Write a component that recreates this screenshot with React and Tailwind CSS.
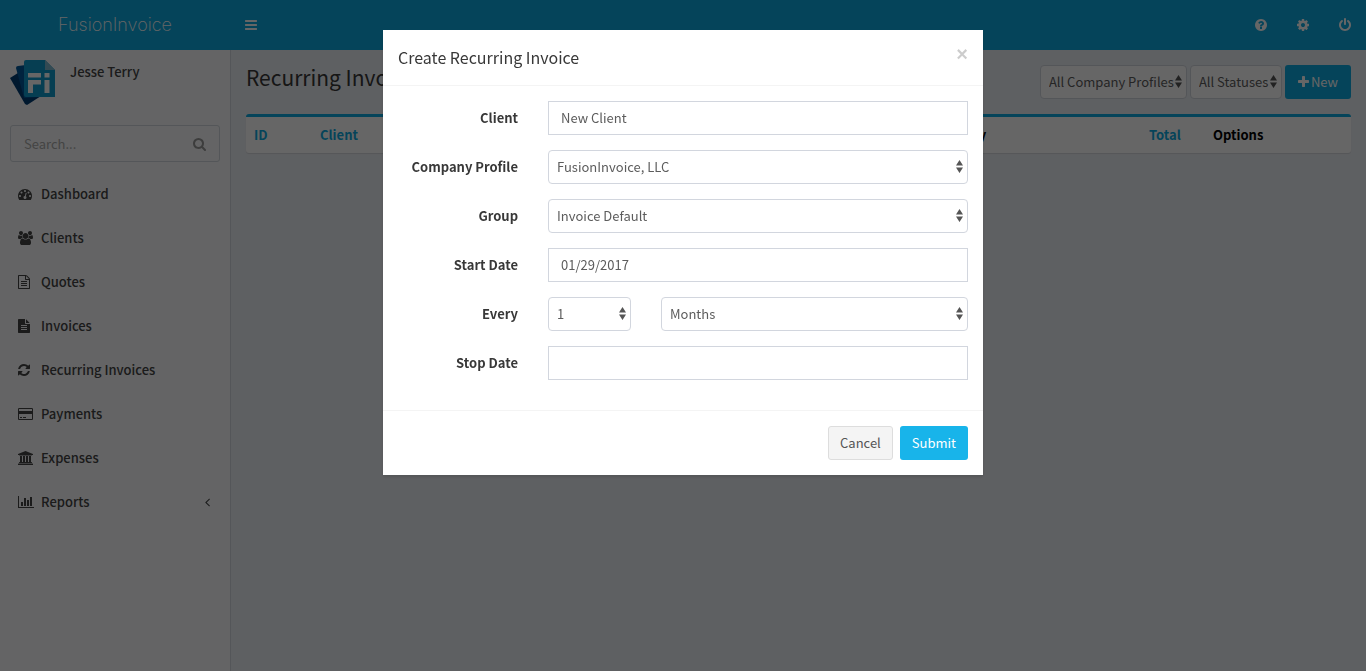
import React from "react";

const ICONS = {
  bars: ["128 0 1536 1792", "M1664 1344v128q0 26-19 45t-45 19h-1408q-26 0-45-19t-19-45v-128q0-26 19-45t45-19h1408q26 0 45 19t19 45zm0-512v128q0 26-19 45t-45 19h-1408q-26 0-45-19t-19-45v-128q0-26 19-45t45-19h1408q26 0 45 19t19 45zm0-512v128q0 26-19 45t-45 19h-1408q-26 0-45-19t-19-45v-128q0-26 19-45t45-19h1408q26 0 45 19t19 45z"],
  search: ["64 0 1664 1792", "M1216 832q0-185-131.5-316.5t-316.5-131.5-316.5 131.5-131.5 316.5 131.5 316.5 316.5 131.5 316.5-131.5 131.5-316.5zm512 832q0 52-38 90t-90 38q-54 0-90-38l-343-342q-179 124-399 124-143 0-273.5-55.5t-225-150-150-225-55.5-273.5 55.5-273.5 150-225 225-150 273.5-55.5 273.5 55.5 225 150 150 225 55.5 273.5q0 220-124 399l343 343q37 37 37 90z"],
  question: ["128 0 1536 1792", "M1024 1376v-192q0-14-9-23t-23-9h-192q-14 0-23 9t-9 23v192q0 14 9 23t23 9h192q14 0 23-9t9-23zm256-672q0-88-55.5-163t-138.5-116-170-41q-243 0-371 213-15 24 8 42l132 100q7 6 19 6 16 0 25-12 53-68 86-92 34-24 86-24 48 0 85.5 26t37.5 59q0 38-20 61t-68 45q-63 28-115.5 86.5t-52.5 125.5v36q0 14 9 23t23 9h192q14 0 23-9t9-23q0-19 21.5-49.5t54.5-49.5q32-18 49-28.5t46-35 44.5-48 28-60.5 12.5-81zm384 192q0 209-103 385.5t-279.5 279.5-385.5 103-385.5-103-279.5-279.5-103-385.5 103-385.5 279.5-279.5 385.5-103 385.5 103 279.5 279.5 103 385.5z"],
  cog: ["128 0 1536 1792", "M1152 896q0-106-75-181t-181-75-181 75-75 181 75 181 181 75 181-75 75-181zm512-109v222q0 12-8 23t-20 13l-185 28q-19 54-39 91 35 50 107 138 10 12 10 25t-9 23q-27 37-99 108t-94 71q-12 0-26-9l-138-108q-44 23-91 38-16 136-29 186-7 28-36 28h-222q-14 0-24.5-8.5t-11.5-21.5l-28-184q-49-16-90-37l-141 107q-10 9-25 9-14 0-25-11-126-114-165-168-7-10-7-23 0-12 8-23 15-21 51-66.5t54-70.5q-27-50-41-99l-183-27q-13-2-21-12.5t-8-23.5v-222q0-12 8-23t19-13l186-28q14-46 39-92-40-57-107-138-10-12-10-24 0-10 9-23 26-36 98.5-107.5t94.5-71.5q13 0 26 10l138 107q44-23 91-38 16-136 29-186 7-28 36-28h222q14 0 24.5 8.5t11.5 21.5l28 184q49 16 90 37l142-107q9-9 24-9 13 0 25 10 129 119 165 170 7 8 7 22 0 12-8 23-15 21-51 66.5t-54 70.5q26 50 41 98l183 28q13 2 21 12.5t8 23.5z"],
  power: ["128 0 1536 1792", "M1664 896q0 156-61 298t-164 245-245 164-298 61-298-61-245-164-164-245-61-298q0-182 80.5-343t226.5-270q43-32 95.5-25t83.5 50q32 42 24.5 94.5t-49.5 84.5q-98 74-151.5 181t-53.5 228q0 104 40.5 198.5t109.5 163.5 163.5 109.5 198.5 40.5 198.5-40.5 163.5-109.5 109.5-163.5 40.5-198.5q0-121-53.5-228t-151.5-181q-42-32-49.5-84.5t24.5-94.5q31-43 84-50t95 25q146 109 226.5 270t80.5 343zm-640-768v640q0 52-38 90t-90 38-90-38-38-90v-640q0-52 38-90t90-38 90 38 38 90z"],
  plus: ["192 0 1408 1792", "M1600 736v192q0 40-28 68t-68 28h-416v416q0 40-28 68t-68 28h-192q-40 0-68-28t-28-68v-416h-416q-40 0-68-28t-28-68v-192q0-40 28-68t68-28h416v-416q0-40 28-68t68-28h192q40 0 68 28t28 68v416h416q40 0 68 28t28 68z"],
  dashboard: ["0 0 1792 1792", "M384 1152q0-53-37.5-90.5t-90.5-37.5-90.5 37.5-37.5 90.5 37.5 90.5 90.5 37.5 90.5-37.5 37.5-90.5zm192-448q0-53-37.5-90.5t-90.5-37.5-90.5 37.5-37.5 90.5 37.5 90.5 90.5 37.5 90.5-37.5 37.5-90.5zm428 481l101-382q6-26-7.5-48.5t-38.5-29.5-48 6.5-30 39.5l-101 382q-60 5-107 43.5t-63 98.5q-20 77 20 146t117 89 146-20 89-117q16-60-6-117t-72-91zm660-33q0-53-37.5-90.5t-90.5-37.5-90.5 37.5-37.5 90.5 37.5 90.5 90.5 37.5 90.5-37.5 37.5-90.5zm-640-640q0-53-37.5-90.5t-90.5-37.5-90.5 37.5-37.5 90.5 37.5 90.5 90.5 37.5 90.5-37.5 37.5-90.5zm448 192q0-53-37.5-90.5t-90.5-37.5-90.5 37.5-37.5 90.5 37.5 90.5 90.5 37.5 90.5-37.5 37.5-90.5zm320 448q0 261-141 483-19 29-54 29h-1402q-35 0-54-29-141-221-141-483 0-182 71-348t191-286 286-191 348-71 348 71 286 191 191 286 71 348z"],
  users: ["0 0 1920 1792", "M593 896q-162 5-265 128h-134q-82 0-138-40.5t-56-118.5q0-353 124-353 6 0 43.5 21t97.5 42.5 119 21.5q67 0 133-23-5 37-5 66 0 139 81 256zm1071 637q0 120-73 189.5t-194 69.5h-874q-121 0-194-69.5t-73-189.5q0-53 3.5-103.5t14-109 26.5-108.5 43-97.5 62-81 85.5-53.5 111.5-20q10 0 43 21.5t73 48 107 48 135 21.5 135-21.5 107-48 73-48 43-21.5q61 0 111.5 20t85.5 53.5 62 81 43 97.5 26.5 108.5 14 109 3.5 103.5zm-1024-1277q0 106-75 181t-181 75-181-75-75-181 75-181 181-75 181 75 75 181zm704 384q0 159-112.5 271.5t-271.5 112.5-271.5-112.5-112.5-271.5 112.5-271.5 271.5-112.5 271.5 112.5 112.5 271.5zm576 225q0 78-56 118.5t-138 40.5h-134q-103-123-265-128 81-117 81-256 0-29-5-66 66 23 133 23 59 0 119-21.5t97.5-42.5 43.5-21q124 0 124 353zm-128-609q0 106-75 181t-181 75-181-75-75-181 75-181 181-75 181 75 75 181z"],
  fileO: ["128 0 1536 1792", "M1596 380q28 28 48 76t20 88v1152q0 40-28 68t-68 28h-1344q-40 0-68-28t-28-68v-1600q0-40 28-68t68-28h896q40 0 88 20t76 48zm-444-244v376h376q-10-29-22-41l-313-313q-12-12-41-22zm384 1528v-1024h-416q-40 0-68-28t-28-68v-416h-768v1536h1280zm-1024-864q0-14 9-23t23-9h704q14 0 23 9t9 23v64q0 14-9 23t-23 9h-704q-14 0-23-9t-9-23v-64zm736 224q14 0 23 9t9 23v64q0 14-9 23t-23 9h-704q-14 0-23-9t-9-23v-64q0-14 9-23t23-9h704zm0 256q14 0 23 9t9 23v64q0 14-9 23t-23 9h-704q-14 0-23-9t-9-23v-64q0-14 9-23t23-9h704z"],
  file: ["128 0 1536 1792", "M1596 476q14 14 28 36h-472v-472q22 14 36 28zm-476 164h544v1056q0 40-28 68t-68 28h-1344q-40 0-68-28t-28-68v-1600q0-40 28-68t68-28h800v544q0 40 28 68t68 28zm160 736v-64q0-14-9-23t-23-9h-704q-14 0-23 9t-9 23v64q0 14 9 23t23 9h704q14 0 23-9t9-23zm0-256v-64q0-14-9-23t-23-9h-704q-14 0-23 9t-9 23v64q0 14 9 23t23 9h704q14 0 23-9t9-23zm0-256v-64q0-14-9-23t-23-9h-704q-14 0-23 9t-9 23v64q0 14 9 23t23 9h704q14 0 23-9t9-23z"],
  refresh: ["128 0 1536 1792", "M1639 1056q0 5-1 7-64 268-268 434.5t-478 166.5q-146 0-282.5-55t-243.5-157l-129 129q-19 19-45 19t-45-19-19-45v-448q0-26 19-45t45-19h448q26 0 45 19t19 45-19 45l-137 137q71 66 161 102t187 36q134 0 250-65t186-179q11-17 53-117 8-23 30-23h192q13 0 22.5 9.5t9.5 22.5zm25-800v448q0 26-19 45t-45 19h-448q-26 0-45-19t-19-45 19-45l138-138q-148-137-349-137-134 0-250 65t-186 179q-11 17-53 117-8 23-30 23h-199q-13 0-22.5-9.5t-9.5-22.5v-7q65-268 270-434.5t480-166.5q146 0 284 55.5t245 156.5l130-129q19-19 45-19t45 19 19 45z"],
  card: ["0 0 1920 1792", "M1760 128q66 0 113 47t47 113v1216q0 66-47 113t-113 47h-1600q-66 0-113-47t-47-113v-1216q0-66 47-113t113-47h1600zm-1600 128q-13 0-22.5 9.5t-9.5 22.5v224h1664v-224q0-13-9.5-22.5t-22.5-9.5h-1600zm1600 1280q13 0 22.5-9.5t9.5-22.5v-608h-1664v608q0 13 9.5 22.5t22.5 9.5h1600zm-1504-128v-128h256v128h-256zm384 0v-128h384v128h-384z"],
  bank: ["0 0 1920 1792", "M960 0l960 384v128h-128q0 26-20.5 45t-48.5 19h-1526q-28 0-48.5-19t-20.5-45h-128v-128zm-704 640h256v768h128v-768h256v768h128v-768h256v768h128v-768h256v768h59q28 0 48.5 19t20.5 45v64h-1664v-64q0-26 20.5-45t48.5-19h59v-768zm1595 960q28 0 48.5 19t20.5 45v128h-1920v-128q0-26 20.5-45t48.5-19h1782z"],
  chart: ["0 0 2048 1792", "M640 896v512h-256v-512h256zm384-512v1024h-256v-1024h256zm1024 1152v128h-2048v-1536h128v1408h1920zm-640-896v768h-256v-768h256zm384-384v1152h-256v-1152h256z"],
  angleLeft: ["582 0 640 1792", "M1203 544q0 13-10 23l-393 393 393 393q10 10 10 23t-10 23l-50 50q-10 10-23 10t-23-10l-466-466q-10-10-10-23t10-23l466-466q10-10 23-10t23 10l50 50q10 10 10 23z"],
};

function Icon({ name }) {
  const [box, d] = ICONS[name];
  return (
    <svg viewBox={box} className="h-[14px] w-auto shrink-0 fill-current" aria-hidden="true">
      <path d={d} />
    </svg>
  );
}

function Logo() {
  return (
    <svg viewBox="0 0 45 45" className="size-[45px] shrink-0" aria-hidden="true">
      <path d="M0 18 L8 13 L31 36 L17 45 L15 44 Z" fill="#003c74" />
      <path d="M6 8 Q6 6 8 6 L16 5 L30 37 L14 38 Z" fill="#00579b" />
      <path d="M14 2 Q14 0 16 0 H35 L45 10 V37 H16 Q14 37 14 35 Z" fill="#109cce" />
      <path d="M35 0 L45 10 H35 Z" fill="#7fb8d0" />
      <path d="M18 13h13v4.500h-13z M18 20h13v4.500h-8v8.500h-5z M34.500 13h5v4.500h-5z M34.500 20h5v13h-5z" fill="#fff" />
    </svg>
  );
}

function Select({ id, label, options, compact = false, className = "" }) {
  return (
    <div className={"relative " + className}>
      <select
        id={id}
        aria-label={label}
        className={
          "block h-[34px] w-full appearance-none rounded-[4px] border border-[#d2d6de] bg-white pl-2 text-[13px] text-[#5c5c5c] " +
          (compact ? "pr-3" : "pr-5")
        }
      >
        {options.map((o) => (
          <option key={o}>{o}</option>
        ))}
      </select>
      <svg viewBox="0 0 7 13" className="pointer-events-none absolute top-[10px] right-[5px] h-[13px] w-[7px] fill-[#555]" aria-hidden="true">
        <path d="M3.500 0 L7 5.500 H0 Z M0 7.500 H7 L3.500 13 Z" />
      </svg>
    </div>
  );
}

function Row({ id, label, children }) {
  return (
    <div className="grid grid-cols-4">
      <label htmlFor={id} className="pr-[15px] text-right leading-[34px] font-bold">
        {label}
      </label>
      <div className="col-span-3 px-[15px]">{children}</div>
    </div>
  );
}

function TextInput({ id, value }) {
  return (
    <input
      id={id}
      type="text"
      defaultValue={value}
      className="block h-[34px] w-full border border-[#d2d6de] bg-white px-3 pb-[2px] text-[13px] text-[#5c5c5c]"
    />
  );
}

const NAV = [
  ["dashboard", "Dashboard"],
  ["users", "Clients"],
  ["fileO", "Quotes"],
  ["file", "Invoices"],
  ["refresh", "Recurring Invoices"],
  ["card", "Payments"],
  ["bank", "Expenses"],
  ["chart", "Reports"],
];

function Sidebar() {
  return (
    <aside className="w-[231px] shrink-0 border-r border-[#d2d6de] bg-[#f9fafc] text-[#444]">
      <div className="flex gap-[15px] p-[10px]">
        <Logo />
        <p className="pt-[2px] leading-5 font-medium">Jesse Terry</p>
      </div>
      <form className="mx-[10px] mt-[10px] flex h-[37px] w-[210px] rounded-[3px] border border-[#d2d6de]">
        <input
          type="text"
          aria-label="Search"
          placeholder="Search..."
          className="min-w-0 flex-1 bg-transparent pl-[13px] placeholder:text-[#aaa]"
        />
        <button type="button" aria-label="Search" className="px-[13px] text-[#999]">
          <Icon name="search" />
        </button>
      </form>
      <nav className="mt-[10px]">
        {NAV.map(([icon, label]) => (
          <a key={label} href="#" className="flex h-11 items-center pr-5 pl-[18px] font-medium">
            <span className="w-[23px]">
              <Icon name={icon} />
            </span>
            <span className="flex-1">{label}</span>
            {label === "Reports" && <Icon name="angleLeft" />}
          </a>
        ))}
      </nav>
    </aside>
  );
}

function Modal() {
  return (
    <div className="fixed inset-0 z-10 overflow-y-auto bg-black/60">
      <div
        role="dialog"
        aria-modal="true"
        aria-labelledby="modal-title"
        className="mx-auto my-[30px] w-[600px] max-w-full bg-white shadow-[0_2px_3px_rgba(0,0,0,0.125)]"
      >
        <div className="flex items-start justify-between border-b border-[#f4f4f4] p-[15px]">
          <h4 id="modal-title" className="text-base leading-[25px]">
            Create Recurring Invoice
          </h4>
          <button
            type="button"
            aria-label="Close"
            className="font-['Liberation_Sans',sans-serif] text-xl leading-[18px] font-bold text-black/20"
          >
            ×
          </button>
        </div>
        <form className="flex flex-col gap-[15px] pt-[15px] pb-[30px]">
          <Row id="client" label="Client">
            <TextInput id="client" value="New Client" />
          </Row>
          <Row id="company" label="Company Profile">
            <Select id="company" options={["FusionInvoice, LLC"]} />
          </Row>
          <Row id="group" label="Group">
            <Select id="group" options={["Invoice Default"]} />
          </Row>
          <Row id="start" label="Start Date">
            <TextInput id="start" value="01/29/2017" />
          </Row>
          <Row id="every" label="Every">
            <div className="flex gap-[30px]">
              <Select id="every" options={["1"]} className="w-[83px]" />
              <Select id="period" label="Period" options={["Months"]} className="flex-1" />
            </div>
          </Row>
          <Row id="stop" label="Stop Date">
            <TextInput id="stop" value="" />
          </Row>
        </form>
        <div className="flex justify-end gap-[7px] border-t border-[#f4f4f4] p-[15px]">
          <button type="button" className="h-[34px] rounded-[3px] border border-[#ddd] bg-[#f4f4f4] px-[11px] text-[#555]">
            Cancel
          </button>
          <button type="button" className="h-[34px] rounded-[3px] bg-[#18b4ea] px-3 text-white">
            Submit
          </button>
        </div>
      </div>
    </div>
  );
}

export default function App() {
  return (
    <div className="flex min-h-screen flex-col bg-[#ecf0f5] font-['Noto_Sans_CJK_SC','Noto_Sans',sans-serif] text-[13px] leading-5 text-[#383838]">
      <header className="flex h-[50px] bg-[#0eaae0] text-white">
        <a href="#" className="flex w-[230px] items-center justify-center font-['Inter',sans-serif] text-lg font-extralight">
          FusionInvoice
        </a>
        <button type="button" aria-label="Toggle navigation" className="px-[15px]">
          <Icon name="bars" />
        </button>
        <nav className="ml-auto flex">
          {["question", "cog", "power"].map((n) => (
            <a key={n} href="#" aria-label={n} className="flex items-center px-[15px]">
              <Icon name={n} />
            </a>
          ))}
        </nav>
      </header>
      <div className="flex flex-1">
        <Sidebar />
        <main className="min-w-0 flex-1 p-[15px]">
          <div className="flex items-start justify-between">
            <h1 className="text-[21px] leading-6">Recurring Invoices</h1>
            <div className="flex gap-[3px]">
              <Select label="Company profile" options={["All Company Profiles"]} compact />
              <Select label="Status" options={["All Statuses"]} compact />
              <button type="button" className="flex h-[34px] items-center gap-[2px] rounded-[3px] bg-[#0eaae0] px-[13px] text-white">
                <Icon name="plus" />
                New
              </button>
            </div>
          </div>
          <div className="mt-[15px] rounded-[3px] border-t-[3px] border-[#0eaae0] bg-white shadow-[0_1px_1px_rgba(0,0,0,0.1)]">
            <table className="w-full table-fixed text-left">
              <thead>
                <tr className="h-9 text-black">
                  <th className="w-[66px] px-2 text-[#0eaae0]"><a href="#">ID</a></th>
                  <th className="px-2 text-[#0eaae0]"><a href="#">Client</a></th>
                  <th className="px-2 text-[#0eaae0]"><a href="#">Next Date</a></th>
                  <th className="px-2 text-[#0eaae0]"><a href="#">Stop Date</a></th>
                  <th className="w-[199px] px-2">Every</th>
                  <th className="w-[64px] px-2 text-[#0eaae0]"><a href="#">Total</a></th>
                  <th className="w-[146px] px-2">Options</th>
                </tr>
              </thead>
            </table>
          </div>
        </main>
      </div>
      <Modal />
    </div>
  );
}
